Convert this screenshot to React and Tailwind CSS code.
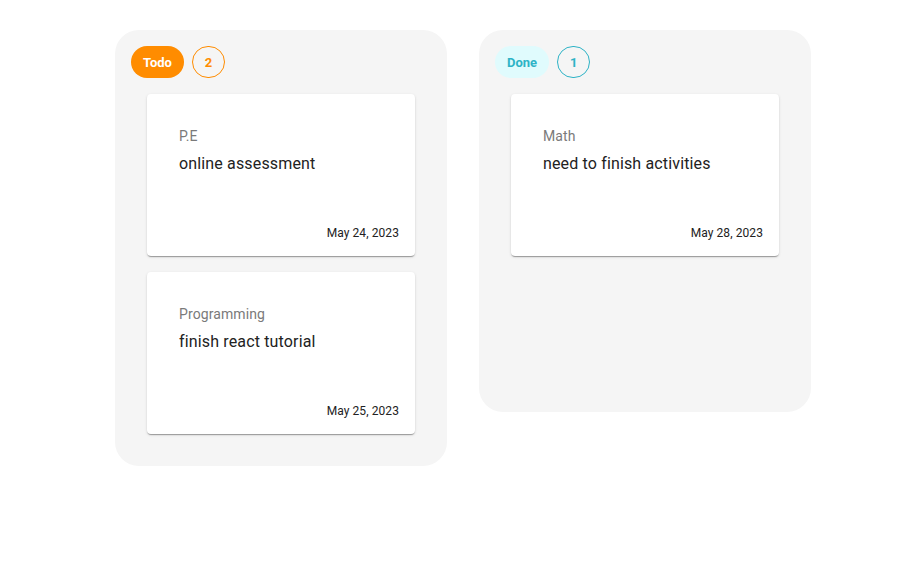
import React from "react";

function Card({ tag, title, date }) {
  return (
    <div className="bg-white rounded-[4px] h-[162px] flex flex-col shadow-[0_2px_1px_-1px_rgba(0,0,0,0.2),0_1px_1px_0_rgba(0,0,0,0.14),0_1px_3px_0_rgba(0,0,0,0.12)]">
      <div className="px-8 pt-8 flex flex-col gap-[5px]">
        <div className="text-[14px] leading-[21px] tracking-[0.1px] text-[#7a7a7a]">{tag}</div>
        <div className="text-[16px] leading-[24px] tracking-[0.15px] text-[#222]">{title}</div>
      </div>
      <div className="mt-auto pb-[14px] pr-4 text-right text-[12px] leading-[18px] tracking-[0.08px] text-[#222]">{date}</div>
    </div>
  );
}

function Column({ label, count, chipCls, countCls, minH, children }) {
  return (
    <div className={`w-[332px] bg-[#f5f5f5] rounded-[24px] pt-4 pb-8 ${minH}`}>
      <div className="flex items-center gap-2 px-4 h-8">
        <div className={`h-8 px-3 pt-[2px] rounded-full flex items-center text-[13px] font-bold ${chipCls}`}>{label}</div>
        <div className={`w-[33px] h-8 pt-[2px] rounded-full border flex items-center justify-center text-[13px] font-bold ${countCls}`}>{count}</div>
      </div>
      <div className="flex flex-col gap-4 px-8 mt-4">{children}</div>
    </div>
  );
}

export default function App() {
  return (
    <div className="w-[916px] h-[571px] bg-white pt-[30px] pl-[115px] flex items-start gap-8" style={{ fontFamily: "Roboto, 'Liberation Sans', sans-serif" }}>
      <Column label="Todo" count="2" chipCls="bg-[#ff8c00] text-white" countCls="border-[#ff8c00] text-[#ff8c00]" minH="">
        <Card tag="P.E" title="online assessment" date="May 24, 2023" />
        <Card tag="Programming" title="finish react tutorial" date="May 25, 2023" />
      </Column>
      <Column label="Done" count="1" chipCls="bg-[#e0fbfd] text-[#2eb3c6]" countCls="border-[#2eb3c6] text-[#2eb3c6]" minH="min-h-[382px]">
        <Card tag="Math" title="need to finish activities" date="May 28, 2023" />
      </Column>
    </div>
  );
}
